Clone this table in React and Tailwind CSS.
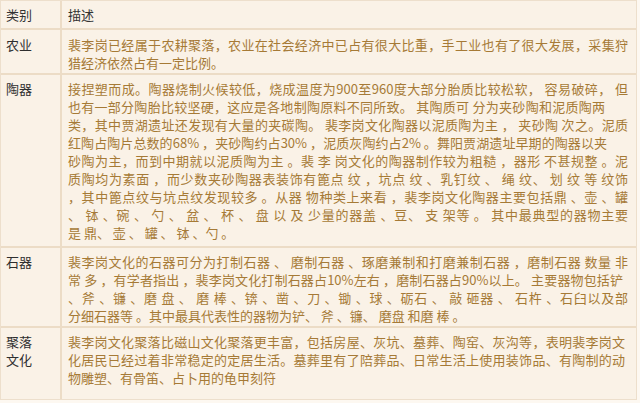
const font = { fontFamily: '"Noto Sans CJK SC", "Noto Sans", sans-serif' };

const rows = [
  {
    label: ['农业'],
    h: 'h-[45px]',
    pt: 'pt-[6px]',
    lines: [
      { t: '裴李岗已经属于农耕聚落，农业在社会经济中已占有很大比重，手工业也有了很大发展，采集狩' },
      { t: '猎经济依然占有一定比例。', last: true },
    ],
  },
  {
    label: ['陶器'],
    h: 'h-[173px]',
    pt: 'pt-[5px]',
    lines: [
      { t: '接捏塑而成。陶器烧制火候较低，烧成温度为900至960度大部分胎质比较松软， 容易破碎， 但' },
      { t: '也有一部分陶胎比较坚硬，这应是各地制陶原料不同所致。 其陶质可 分为夹砂陶和泥质陶两', w: 'w-[537px]' },
      { t: '类，其中贾湖遗址还发现有大量的夹碳陶。 裴李岗文化陶器以泥质陶为主 ， 夹砂陶 次之。泥质' },
      { t: '红陶占陶片总数的68% ，夹砂陶约占30% ，泥质灰陶约占2% 。舞阳贾湖遗址早期的陶器以夹', w: 'w-[539px]' },
      { t: '砂陶为主，而到中期就以泥质陶为主 。裴 李 岗文化的陶器制作较为粗糙 ，器形 不甚规整 。泥' },
      { t: '质陶均为素面 ，而少数夹砂陶器表装饰有篦点 纹 ，坑点 纹 、乳钉纹 、 绳 纹、 划 纹 等 纹饰' },
      { t: '，其中篦点纹与坑点纹发现较多 。从器 物种类上来看 ，裴李岗文化陶器主要包括鼎 、壶 、罐' },
      { t: '、 钵 、碗 、 勺 、 盆 、 杯 、 盘 以 及 少量的器盖 、豆、 支 架等 。 其中最典型的器物主要' },
      { t: '是 鼎、 壶 、 罐 、 钵 、勺 。', last: true },
    ],
  },
  {
    label: ['石器'],
    h: 'h-[80px]',
    pt: 'pt-[5px]',
    lines: [
      { t: '裴李岗文化的石器可分为打制石器 、 磨制石器 、琢磨兼制和打磨兼制石器 ，磨制石器 数量 非' },
      { t: '常 多 ，有学者指出 ，裴李岗文化打制石器占10%左右 ，磨制石器占90%以上。 主要器物包括铲', w: 'w-[555px]' },
      { t: '、斧 、镰 、磨 盘 、 磨 棒 、锛 、凿 、刀 、锄 、球 、砺石 、 敲 砸器 、 石杵 、石臼以及部' },
      { t: '分细石器等 。其中最具代表性的器物为铲、 斧 、镰、 磨盘 和磨 棒 。', last: true },
    ],
  },
  {
    label: ['聚落', '文化'],
    h: 'h-[71px]',
    pt: 'pt-[5px]',
    lines: [
      { t: '裴李岗文化聚落比磁山文化聚落更丰富，包括房屋、灰坑、墓葬、陶窑、灰沟等，表明裴李岗文', w: 'w-[557px]' },
      { t: '化居民已经过着非常稳定的定居生活。墓葬里有了陪葬品、日常生活上使用装饰品、有陶制的动', w: 'w-[557px]' },
      { t: '物雕塑、有骨笛、占卜用的龟甲刻符', last: true },
    ],
  },
];

function Line({ line }) {
  if (line.last) {
    return <div className="whitespace-pre">{line.t}</div>;
  }
  return (
    <div className={`${line.w || 'w-full'} text-justify [text-align-last:justify] whitespace-pre-wrap`}>
      {line.t}
    </div>
  );
}

export default function App() {
  return (
    <div className="w-[640px] h-[403px] bg-[#fdf8f1]" style={font}>
      <div className="w-[637px] border border-[#eddfcc] bg-[#faf2e7] text-[13px] leading-[18px]">
        {/* header */}
        <div className="flex h-[29px] border-b-2 border-[#ecdcc6]">
          <div className="w-[61px] shrink-0 border-r-2 border-[#ecdcc6] pl-[5px] flex items-center text-[#333]">类别</div>
          <div className="flex-1 pl-[6px] flex items-center text-[#333]">描述</div>
        </div>

        {rows.map((r, i) => (
          <div
            key={i}
            className={`flex ${r.h} ${i < rows.length - 1 ? 'border-b-2 border-[#ecdcc6]' : ''}`}
          >
            <div className={`w-[61px] shrink-0 border-r-2 border-[#ecdcc6] pl-[5px] ${r.pt} text-[#2e2e2e]`}>
              {r.label.map((l) => (
                <div key={l}>{l}</div>
              ))}
            </div>
            <div className={`flex-1 pl-[6px] pr-[8px] ${r.pt} text-[#a67a36] overflow-hidden`}>
              {r.lines.map((l, j) => (
                <Line key={j} line={l} />
              ))}
            </div>
          </div>
        ))}
      </div>
    </div>
  );
}
